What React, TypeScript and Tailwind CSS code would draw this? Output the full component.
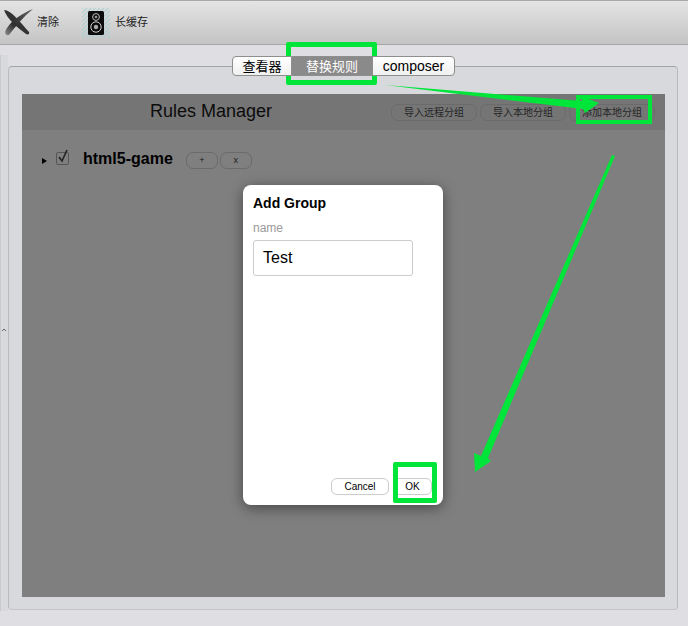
import React from "react";

const CJK = "font-['Liberation_Sans','Noto_Sans_CJK_SC',sans-serif]";

function SweepIcon() {
	return (
		<svg width="31" height="28" viewBox="0 0 31 28">
			<defs>
				<linearGradient id="sw" x1="0" y1="1" x2="1" y2="0">
					<stop offset="0" stopColor="#8c8c8c" />
					<stop offset="0.35" stopColor="#2e2e2e" />
					<stop offset="1" stopColor="#666" />
				</linearGradient>
			</defs>
			<path d="M1 1 C8 1 17 13 26 23 C27 25 25 26 23 25 C15 19 4 10 1 1Z" fill="#333" />
			<path d="M30 0 C20 4 10 10 4 19 C1 23 2 27 6 26 C12 18 20 8 30 0Z" fill="url(#sw)" />
		</svg>
	);
}

function SpeakerIcon() {
	return (
		<svg width="28" height="30" viewBox="0 0 28 30">
			<defs>
				<pattern id="hatch" width="3" height="3" patternUnits="userSpaceOnUse" patternTransform="rotate(45)">
					<rect width="1" height="3" fill="#a9d0d0" />
				</pattern>
			</defs>
			<rect width="28" height="30" fill="url(#hatch)" />
			<rect x="6" y="3" width="16" height="24" rx="1.5" fill="#0c0c0c" />
			<circle cx="14" cy="9" r="3.4" fill="none" stroke="#bbb" strokeWidth="1" />
			<circle cx="14" cy="9" r="1.3" fill="#999" />
			<circle cx="14" cy="19" r="5.2" fill="none" stroke="#ccc" strokeWidth="1" />
			<circle cx="14" cy="19" r="2.2" fill="#aaa" />
		</svg>
	);
}

function ToolItem({ icon, label, className }: { icon: React.ReactNode; label: string; className: string }) {
	return (
		<div className={`flex items-center ${className}`}>
			{icon}
			<span className={`text-[11px] text-[#222] ${CJK}`}>{label}</span>
		</div>
	);
}

function Tab({ label, active, className }: { label: string; active?: boolean; className: string }) {
	return (
		<div
			className={`h-[20px] flex items-center justify-center leading-none border border-[#8e8e8e] ${className} ${
				active ? "bg-[#8a8a8a] text-white" : "bg-gradient-to-b from-white to-[#f0f0f0] text-black"
			}`}
		>
			{label}
		</div>
	);
}

function HeadBtn({ label }: { label: string }) {
	return (
		<div className="w-[86px] h-[17px] flex items-center justify-center rounded-[7px] border border-[#6b6b6b] text-[10px] text-[#262626]">
			{label}
		</div>
	);
}

function SmallBtn({ label }: { label: string }) {
	return (
		<div className="w-[32px] h-[17px] flex items-center justify-center rounded-[7px] border border-[#6b6b6b] text-[9px] text-[#1c1c1c]">
			{label}
		</div>
	);
}

export default function App() {
	return (
		<div className={`relative w-[688px] h-[626px] overflow-hidden flex flex-col bg-[#dfdfe3] ${CJK}`}>
			{/* Toolbar */}
			<div className="h-[45px] shrink-0 flex items-center border-t border-b border-t-[#a8a8a8] border-b-[#a6a6a6] bg-gradient-to-b from-[#e4e4e4] to-[#c4c4c4]">
				<ToolItem icon={<SweepIcon />} label="清除" className="ml-[3px] gap-[3px] w-[79px]" />
				<ToolItem icon={<SpeakerIcon />} label="长缓存" className="gap-[5px]" />
			</div>

			{/* Body */}
			<div className="flex-1 flex">
				{/* Splitter */}
				<div className="w-[8px] shrink-0 flex items-center mt-[10px] mb-[15px] border-l border-[#c9cacd] bg-[#d8d9dd]">
					<svg width="6" height="6" viewBox="0 0 6 6" className="mt-[-6px]">
						<path d="M1 4 L3 2 L5 4" fill="none" stroke="#666" strokeWidth="1" />
					</svg>
				</div>
				<div className="flex-1 flex flex-col pt-[11px] pb-[16px] pr-[10px]">
					<div className="relative z-10 h-[20px] shrink-0 flex ml-[224px] -mb-[10px]">
						<Tab label="查看器" className="w-[60px] rounded-l-[4px] text-[13px]" />
						<Tab label="替换规则" active className="w-[80px] border-x-0 text-[13px]" />
						<Tab label="composer" className="w-[83px] rounded-r-[4px] text-[14px]" />
					</div>
					<div className="flex-1 flex flex-col rounded-[4px] border border-t-[#a3a3a5] border-x-[#b9babd] border-b-[#c4c5c8] bg-[#d8d9dd] pt-[27px] pl-[13px] pr-[12px] pb-[12px]">
						<div className="flex-1 flex flex-col bg-[#7f7f7f]">
							<div className="h-[36px] shrink-0 flex items-center bg-[#757575]">
								<div className="w-[378px] text-center text-[18px] leading-[22px] mb-[3px] text-[#0c0c0c]">Rules Manager</div>
								<div className="ml-[-9px] flex gap-[3px]">
									<HeadBtn label="导入远程分组" />
									<HeadBtn label="导入本地分组" />
									<HeadBtn label="添加本地分组" />
								</div>
							</div>
							<div className="flex items-center mt-[19px] pl-[20px]">
								<div className="w-0 h-0 border-y-[3px] border-y-transparent border-l-[5px] border-l-black mt-[3px]" />
								<div className="ml-[9px] w-[13px] h-[13px] -mt-[2px] rounded-[2px] border border-[#555] flex items-center justify-center">
									<svg width="13" height="15" viewBox="0 0 13 15" className="-mt-[3px] shrink-0">
										<path d="M3 8 L6 12 L11 1" fill="none" stroke="#222" strokeWidth="1.6" />
									</svg>
								</div>
								<span className="ml-[14px] text-[16px] leading-[20px] font-bold text-black">html5-game</span>
								<div className="ml-[13px] flex gap-[2px] mt-[3px]">
									<SmallBtn label="+" />
									<SmallBtn label="x" />
								</div>
							</div>
						</div>
					</div>
				</div>
			</div>

			{/* Modal */}
			<div className="absolute left-[243px] top-[185px] w-[200px] h-[320px] flex flex-col rounded-[8px] bg-white px-[10px] pt-[9px] pb-[10px] shadow-[0_3px_14px_rgba(0,0,0,0.45)]">
				<div className="text-[14px] font-bold leading-[18px] text-black">Add Group</div>
				<div className="mt-[9px] text-[12px] leading-[14px] text-[#999]">name</div>
				<div className="mt-[5px] w-[160px] h-[36px] flex items-center pl-[9px] rounded-[3px] border border-[#ccc] text-[16px] text-black">
					Test
				</div>
				<div className="mt-auto flex justify-end gap-[4px] pr-[1px]">
					<div className="w-[58px] h-[17px] flex items-center justify-center rounded-[6px] border border-[#ccc] text-[10px] text-black">Cancel</div>
					<div className="w-[39px] h-[17px] flex items-center justify-center rounded-[6px] border border-[#ccc] text-[10px] text-black">OK</div>
				</div>
			</div>

			{/* Annotations */}
			<div className="absolute left-[286px] top-[42px] w-[91px] h-[43px] border-[5px] border-[#00e53a] rounded-[2px]" />
			<div className="absolute left-[576px] top-[95px] w-[76px] h-[29px] border-[4px] border-[#00e53a]" />
			<div className="absolute left-[393px] top-[462px] w-[44px] h-[41px] border-[5px] border-[#00e53a] rounded-[2px]" />
			<svg className="absolute left-0 top-0 pointer-events-none" width="688" height="626" viewBox="0 0 688 626">
				<polygon points="385,85 582,101 581,96 599,103 585,113 583,109" fill="#00e53a" />
				<polygon points="612,155 615,156 488,458 491,461 475,472 474,453 481,456" fill="#00e53a" />
			</svg>
		</div>
	);
}
